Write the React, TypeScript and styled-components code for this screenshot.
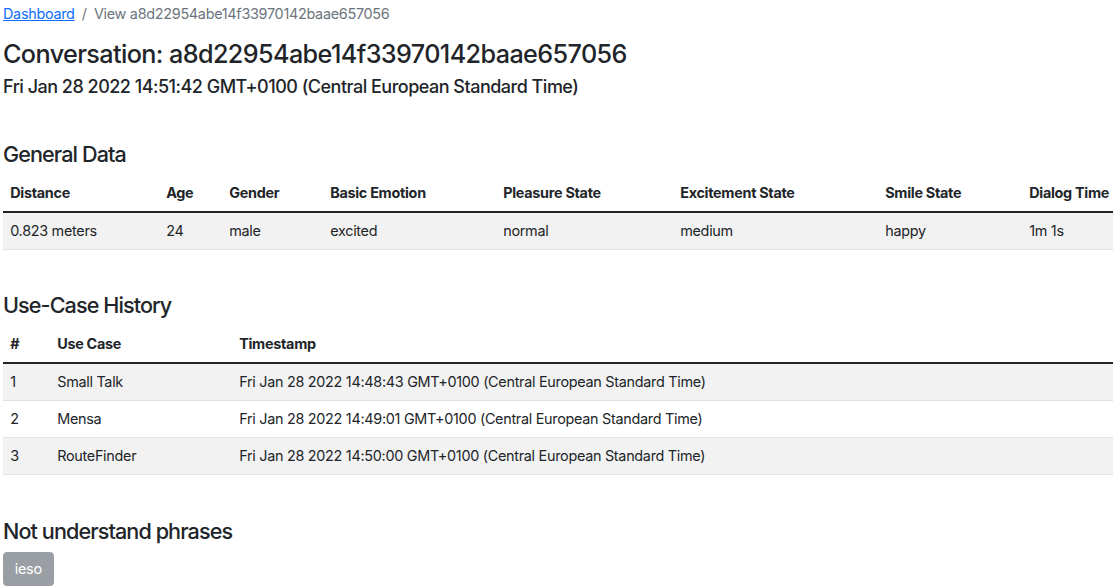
import React from "react";
import styled, { createGlobalStyle } from "styled-components";

const GlobalStyle = createGlobalStyle`
  html, body { margin: 0; padding: 0; background: #fff; }
  body {
    font-family: Inter, "Noto Sans", "Liberation Sans", sans-serif;
    font-size: 14.4px;
    line-height: 21.6px;
    letter-spacing: -0.02em;
    color: #212529;
    -webkit-font-smoothing: antialiased;
  }
  * { box-sizing: border-box; }
`;

const Page = styled.div`
  padding: 3px 0 0 3px;
`;

const Breadcrumb = styled.nav`
  display: flex;
  align-items: center;
  margin-bottom: 14.4px;
  font-size: 14.4px;
`;

const Crumb = styled.a`
  color: #0d6efd;
  text-decoration: underline;
`;

const Divider = styled.span`
  color: #6c757d;
  padding: 0 7.2px;
`;

const Active = styled.span`
  color: #6c757d;
`;

const Title = styled.h3`
  margin: 0 0 7.2px;
  font-size: 25.2px;
  font-weight: 500;
  line-height: 1.2;
  letter-spacing: -0.024em;
`;

const Subtitle = styled.h5`
  margin: 0 0 7.2px;
  font-size: 18px;
  font-weight: 500;
  line-height: 1.2;
  letter-spacing: -0.028em;
`;

const Section = styled.section<{ $top: number }>`
  margin-top: ${(p) => p.$top}px;
`;

const SectionTitle = styled.h4`
  margin: 0 0 7.2px;
  font-size: 21.6px;
  font-weight: 500;
  line-height: 1.2;
  letter-spacing: -0.042em;
`;

const Table = styled.table`
  width: 100%;
  border-collapse: collapse;
  margin-bottom: 14.4px;
  table-layout: fixed;
`;

const Th = styled.th<{ $w?: number }>`
  text-align: left;
  font-weight: 700;
  padding: 7.2px;
  border-bottom: 1px solid #dee2e6;
  ${(p) => (p.$w ? `width: ${p.$w}px;` : "")}
  white-space: nowrap;
`;

const Body = styled.tbody`
  border-top: 2px solid #212529;
`;

const Row = styled.tr`
  &:nth-child(odd) {
    background: #f2f2f2;
  }
`;

const Td = styled.td`
  padding: 7.2px;
  border-bottom: 1px solid #dee2e6;
  white-space: nowrap;
`;

const Badge = styled.button`
  font-family: inherit;
  font-size: 14.4px;
  line-height: 21.6px;
  letter-spacing: -0.02em;
  color: #fff;
  background: #9a9fa5;
  border: 1px solid #9a9fa5;
  border-radius: 3.6px;
  padding: 5px 10.8px;
  cursor: default;
`;

const generalCols: [string, number][] = [
  ["Distance", 156],
  ["Age", 63],
  ["Gender", 101],
  ["Basic Emotion", 173],
  ["Pleasure State", 177],
  ["Excitement State", 205],
  ["Smile State", 144],
  ["Dialog Time", 0],
];

const generalRow = ["0.823 meters", "24", "male", "excited", "normal", "medium", "happy", "1m 1s"];

const history = [
  ["1", "Small Talk", "Fri Jan 28 2022 14:48:43 GMT+0100 (Central European Standard Time)"],
  ["2", "Mensa", "Fri Jan 28 2022 14:49:01 GMT+0100 (Central European Standard Time)"],
  ["3", "RouteFinder", "Fri Jan 28 2022 14:50:00 GMT+0100 (Central European Standard Time)"],
];

export default function App() {
  return (
    <>
      <GlobalStyle />
      <Page>
        <Breadcrumb>
          <Crumb href="#">Dashboard</Crumb>
          <Divider>/</Divider>
          <Active>View a8d22954abe14f33970142baae657056</Active>
        </Breadcrumb>
        <Title>Conversation: a8d22954abe14f33970142baae657056</Title>
        <Subtitle>Fri Jan 28 2022 14:51:42 GMT+0100 (Central European Standard Time)</Subtitle>

        <Section $top={44}>
          <SectionTitle>General Data</SectionTitle>
          <Table>
            <thead>
              <tr>
                {generalCols.map(([h, w]) => (
                  <Th key={h} $w={w || undefined}>{h}</Th>
                ))}
              </tr>
            </thead>
            <Body>
              <Row>
                {generalRow.map((c, i) => (
                  <Td key={i}>{c}</Td>
                ))}
              </Row>
            </Body>
          </Table>
        </Section>

        <Section $top={43}>
          <SectionTitle>Use-Case History</SectionTitle>
          <Table>
            <thead>
              <tr>
                <Th $w={47}>#</Th>
                <Th $w={182}>Use Case</Th>
                <Th>Timestamp</Th>
              </tr>
            </thead>
            <Body>
              {history.map((r) => (
                <Row key={r[0]}>
                  {r.map((c, i) => (
                    <Td key={i}>{c}</Td>
                  ))}
                </Row>
              ))}
            </Body>
          </Table>
        </Section>

        <Section $top={44}>
          <SectionTitle>Not understand phrases</SectionTitle>
          <Badge>ieso</Badge>
        </Section>
      </Page>
    </>
  );
}
